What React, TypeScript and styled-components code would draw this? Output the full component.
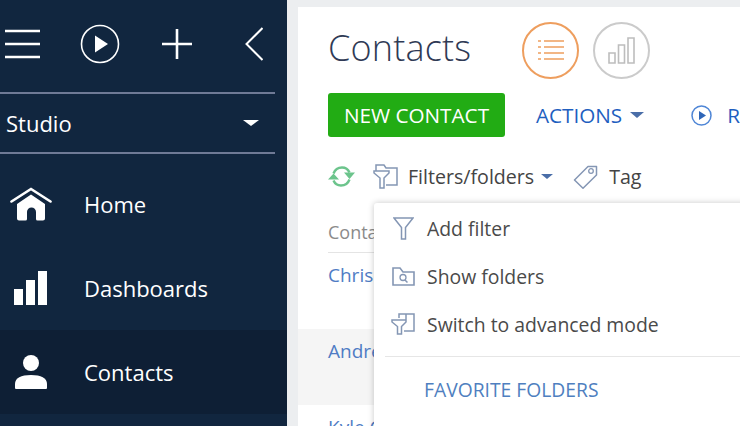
import styled, { createGlobalStyle } from "styled-components";

const GlobalStyle = createGlobalStyle`
  html, body {
    margin: 0;
    padding: 0;
    width: 740px;
    height: 426px;
    overflow: hidden;
    font-family: "Open Sans", "Liberation Sans", sans-serif;
    background: #eceef0;
  }
`;

const Page = styled.div`
  display: flex;
  width: 740px;
  height: 426px;
  overflow: hidden;
`;

const Sidebar = styled.aside`
  flex: 0 0 287px;
  background: #11263f;
  color: #fff;
  display: flex;
  flex-direction: column;
`;

const TopIcons = styled.div`
  height: 92px;
  box-sizing: border-box;
  padding: 0 0 4px 5px;
  display: flex;
  align-items: center;
`;

const TopIcon = styled.span<{ $left?: number }>`
  display: flex;
  margin-left: ${(p) => p.$left ?? 0}px;
`;

const Picker = styled.div`
  width: 275px;
  height: 62px;
  box-sizing: border-box;
  border-top: 2px solid #6f7a96;
  border-bottom: 2px solid #6f7a96;
  display: flex;
  align-items: center;
  justify-content: space-between;
  padding: 0 16px 0 6px;
  font-size: 22px;
`;

const Caret = styled.span<{ $size: number; $color: string }>`
  display: inline-block;
  width: 0;
  height: 0;
  border-left: ${(p) => p.$size}px solid transparent;
  border-right: ${(p) => p.$size}px solid transparent;
  border-top: ${(p) => Math.round(p.$size * 0.8)}px solid ${(p) => p.$color};
`;

const NavList = styled.nav`
  margin-top: 8px;
`;

const NavItem = styled.div<{ $active?: boolean }>`
  height: 84px;
  display: flex;
  align-items: center;
  background: ${(p) => (p.$active ? "#0e1f35" : "transparent")};
  font-size: 22px;
`;

const NavIcon = styled.span`
  flex: 0 0 84px;
  display: flex;
  justify-content: center;
  padding-right: 22px;
  box-sizing: border-box;
`;

const Main = styled.main`
  flex: 1;
  margin: 7px 0 0 11px;
  background: #fff;
  position: relative;
  min-width: 0;
  overflow: hidden;
`;

const Header = styled.div`
  display: flex;
  align-items: center;
  height: 86px;
  padding-left: 30px;
`;

const Title = styled.h1`
  margin: -5px 53px 0 0;
  font-size: 36px;
  font-weight: 300;
  color: #2f3a55;
  width: 141px;
  white-space: nowrap;
  letter-spacing: 0.2px;
`;

const ViewButton = styled.div<{ $color: string }>`
  width: 57px;
  height: 57px;
  box-sizing: border-box;
  border-radius: 50%;
  border: 2px solid ${(p) => p.$color};
  display: flex;
  align-items: center;
  justify-content: center;
  margin-right: 14px;
`;

const Actions = styled.div`
  display: flex;
  align-items: center;
  padding-left: 30px;
  white-space: nowrap;
`;

const PrimaryButton = styled.div`
  width: 178px;
  height: 44px;
  background: #22ac14;
  border-radius: 3px;
  color: #fff;
  font-size: 20.7px;
  display: flex;
  align-items: center;
  justify-content: center;
`;

const LinkButton = styled.div`
  display: flex;
  align-items: center;
  color: #1f5fbf;
  font-size: 20.7px;
  margin-left: 31px;
  gap: 8px;
`;

const RunButton = styled(LinkButton)`
  margin-left: 47px;
  gap: 15px;
`;

const Toolbar = styled.div`
  display: flex;
  align-items: center;
  height: 40px;
  margin-top: 19px;
  padding-left: 30px;
  color: #444;
  font-size: 19.6px;
  white-space: nowrap;
`;

const ToolText = styled.span<{ $left: number }>`
  margin-left: ${(p) => p.$left}px;
`;

const ToolCaret = styled.span`
  margin: 0 20px 0 7px;
  display: flex;
`;

const ToolIcon = styled.span<{ $left?: number }>`
  display: flex;
  margin-left: ${(p) => p.$left ?? 0}px;
`;

const Table = styled.div`
  margin-top: 15px;
`;

const ColumnHead = styled.div`
  margin-left: 30px;
  height: 41px;
  line-height: 43px;
  border-bottom: 1px solid #e4e4e4;
  color: #8b8b8b;
  font-size: 18px;
`;

const Row = styled.div<{ $shaded?: boolean }>`
  height: 76px;
  box-sizing: border-box;
  padding: 9px 0 0 30px;
  background: ${(p) => (p.$shaded ? "#f5f5f5" : "transparent")};
  color: #4f7cc4;
  font-size: 19px;
  line-height: 26px;
`;

const Menu = styled.div`
  position: absolute;
  left: 76px;
  top: 196px;
  width: 420px;
  height: 240px;
  background: #fff;
  border-radius: 3px;
  box-shadow: 0 0 6px rgba(0, 0, 0, 0.22);
  padding-top: 1px;
`;

const MenuItem = styled.div`
  height: 48px;
  display: flex;
  align-items: center;
  color: #4a4a4a;
  font-size: 19.4px;
  white-space: nowrap;
`;

const MenuIcon = styled.span`
  flex: 0 0 53px;
  display: flex;
  justify-content: center;
  padding-left: 5px;
  box-sizing: border-box;
`;

const MenuDivider = styled.div`
  height: 1px;
  background: #e6e6e6;
  margin: 8px 0 0 11px;
`;

const MenuHeading = styled.div`
  margin: 20px 0 0 50px;
  color: #4f7fc0;
  font-size: 19.3px;
  line-height: 26px;
  white-space: nowrap;
`;

const App = () => (
  <Page>
    <GlobalStyle />
    <Sidebar>
      <TopIcons>
        <TopIcon>
          <svg width="36" height="30" viewBox="0 0 36 30">
            <path d="M0 2h35M0 15h35M0 28h35" stroke="#fff" strokeWidth="2.6" fill="none" />
          </svg>
        </TopIcon>
        <TopIcon $left={39}>
          <svg width="40" height="40" viewBox="0 0 40 40">
            <circle cx="20" cy="20" r="18.5" stroke="#fff" strokeWidth="1.6" fill="none" />
            <path d="M15 11.5 28 20 15 28.5z" fill="#fff" />
          </svg>
        </TopIcon>
        <TopIcon $left={41}>
          <svg width="32" height="32" viewBox="0 0 32 32">
            <path d="M16 1v30M1 16h30" stroke="#fff" strokeWidth="2.6" fill="none" />
          </svg>
        </TopIcon>
        <TopIcon $left={52}>
          <svg width="18" height="34" viewBox="0 0 18 34">
            <path d="M17.5 1 1.5 17l16 16" stroke="#fff" strokeWidth="2" fill="none" />
          </svg>
        </TopIcon>
      </TopIcons>
      <Picker>
        Studio
        <Caret $size={8} $color="#fff" />
      </Picker>
      <NavList>
        <NavItem>
          <NavIcon>
            <svg width="42" height="34" viewBox="0 0 42 34">
              <path d="M1.500 14.500 21 2l19.500 12.500" stroke="#fff" strokeWidth="2.600" fill="none" strokeLinecap="round" />
              <path
                d="M21 7.500 35 17v14.500a2 2 0 0 1-2 2h-5.500a1.500 1.500 0 0 1-1.500-1.500v-7a4.500 4.500 0 0 0-9 0v7a1.500 1.500 0 0 1-1.500 1.500H9a2 2 0 0 1-2-2V17z"
                fill="#fff"
              />
            </svg>
          </NavIcon>
          Home
        </NavItem>
        <NavItem>
          <NavIcon>
            <svg width="34" height="34" viewBox="0 0 34 34">
              <path d="M0 18h9v16H0zM12 9h9v25h-9zM24 0h9v34h-9z" fill="#fff" />
            </svg>
          </NavIcon>
          Dashboards
        </NavItem>
        <NavItem $active>
          <NavIcon>
            <svg width="32" height="34" viewBox="0 0 32 34">
              <circle cx="16" cy="8" r="8" fill="#fff" />
              <path d="M0 33v-4c0-6 6-9 16-9s16 3 16 9v4a1 1 0 0 1-1 1H1a1 1 0 0 1-1-1z" fill="#fff" />
            </svg>
          </NavIcon>
          Contacts
        </NavItem>
      </NavList>
    </Sidebar>
    <Main>
      <Header>
        <Title>Contacts</Title>
        <ViewButton $color="#ee9e5e">
          <svg width="26" height="22" viewBox="0 0 26 22">
            <path
              d="M0 2h3M6 2h20M0 8h3M6 8h20M0 14h3M6 14h20M0 20h3M6 20h20"
              stroke="#ee9e5e"
              strokeWidth="1.4"
              fill="none"
            />
          </svg>
        </ViewButton>
        <ViewButton $color="#cbcbcb">
          <svg width="27" height="27" viewBox="0 0 27 27">
            <path d="M1 16h6v10H1zM10.500 8h6v18h-6zM20 1h6v25h-6z" stroke="#bdbdbd" strokeWidth="1.6" fill="none" />
          </svg>
        </ViewButton>
      </Header>
      <Actions>
        <PrimaryButton>NEW CONTACT</PrimaryButton>
        <LinkButton>
          ACTIONS
          <Caret $size={7} $color="#4a6ea8" />
        </LinkButton>
        <RunButton>
          <svg width="21" height="21" viewBox="0 0 21 21">
            <circle cx="10.500" cy="10.500" r="9.500" stroke="#4f86d6" strokeWidth="1.500" fill="none" />
            <path d="M8 6l7 4.500L8 15z" fill="#2f66b8" />
          </svg>
          R
        </RunButton>
      </Actions>
      <Toolbar>
        <ToolIcon>
          <svg width="27" height="21" viewBox="0 0 27 21">
            <path d="M5.500 7.500C7 3.500 10 1.500 14 1.500c3.500 0 6 1.500 7.500 5" stroke="#6cc48c" strokeWidth="2.400" fill="none" />
            <path d="M16 6.500h11l-5.500 6.500zM0 13.500 5.500 7.500l5.500 6z" fill="#6cc48c" />
            <path d="M21.500 13.500C20 17.500 17 19.500 13 19.500c-3.500 0-6-1.500-7.500-5" stroke="#6cc48c" strokeWidth="2.400" fill="none" />
          </svg>
        </ToolIcon>
        <ToolIcon $left={18}>
          <svg width="25" height="25" viewBox="0 0 25 25">
            <path
              d="M3 7V1h8l2 3h11v17H13M1 7h15v2l-5 5v10H7V14L1 9z"
              stroke="#8496b4"
              strokeWidth="1.500"
              fill="none"
            />
          </svg>
        </ToolIcon>
        <ToolText $left={10}>Filters/folders</ToolText>
        <ToolCaret>
          <Caret $size={6} $color="#4a6ea8" />
        </ToolCaret>
        <ToolIcon>
          <svg width="25" height="25" viewBox="0 0 25 25">
            <path d="M1.500 16 15 2.500h8.500V11L10 24.200z" stroke="#8496b4" strokeWidth="1.500" fill="none" strokeLinejoin="round" />
            <circle cx="18" cy="7" r="2.300" stroke="#8496b4" strokeWidth="1.300" fill="none" />
          </svg>
        </ToolIcon>
        <ToolText $left={11}>Tag</ToolText>
      </Toolbar>
      <Table>
        <ColumnHead>Contact name</ColumnHead>
        <Row>Chris Brown</Row>
        <Row $shaded>Andrew Baker</Row>
        <Row>Kyle Clark</Row>
      </Table>
      <Menu>
        <MenuItem>
          <MenuIcon>
            <svg width="21" height="23" viewBox="0 0 21 23">
              <path d="M1 1h19l-7.500 9.500V22h-4V10.500z" stroke="#8496b4" strokeWidth="1.500" fill="none" />
            </svg>
          </MenuIcon>
          Add filter
        </MenuItem>
        <MenuItem>
          <MenuIcon>
            <svg width="23" height="19" viewBox="0 0 23 19">
              <path d="M1 18V1h7l3 4h11v13z" stroke="#8496b4" strokeWidth="1.600" fill="none" />
              <circle cx="11" cy="10.500" r="3" stroke="#8496b4" strokeWidth="1.300" fill="none" />
              <path d="M13 13l2.500 2.500" stroke="#8496b4" strokeWidth="1.500" />
            </svg>
          </MenuIcon>
          Show folders
        </MenuItem>
        <MenuItem>
          <MenuIcon>
            <svg width="24" height="22" viewBox="0 0 24 22">
              <path
                d="M8 5V1h15v17H13M1 7h14v2l-4.500 4.500V21H6.500v-7.500L1 9zM15 1v6"
                stroke="#8496b4"
                strokeWidth="1.500"
                fill="none"
              />
            </svg>
          </MenuIcon>
          Switch to advanced mode
        </MenuItem>
        <MenuDivider />
        <MenuHeading>FAVORITE FOLDERS</MenuHeading>
      </Menu>
    </Main>
  </Page>
);

export default App;
